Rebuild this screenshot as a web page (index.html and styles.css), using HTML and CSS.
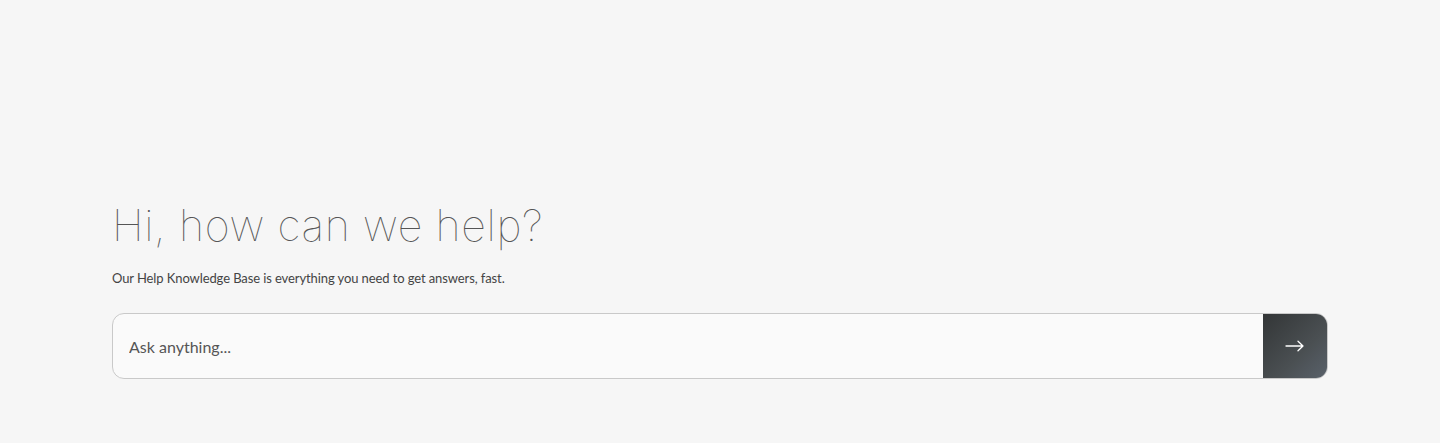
FILE: index.html
```html
<!DOCTYPE html>
<html lang="en">
<head>
<meta charset="utf-8">
<title>Help</title>
<link rel="stylesheet" href="styles.css">
</head>
<body>
<main class="hero">
  <h1 class="title">Hi, how can we help?</h1>
  <p class="lead">Our Help Knowledge Base is everything you need to get answers, fast.</p>
  <form class="search">
    <input class="search-input" type="text" placeholder="Ask anything...">
    <button class="search-btn" type="button" aria-label="Search">
      <svg width="20" height="12" viewBox="0 0 20 12" fill="none" stroke="#fff" stroke-width="1.3" stroke-linecap="round" stroke-linejoin="round"><path d="M1 6h17M13 1.2 18 6l-5 4.8"/></svg>
    </button>
  </form>
</main>
</body>
</html>
```
FILE: styles.css
```css
html, body { margin: 0; padding: 0; }
body {
  background: #f6f6f6;
  font-family: "Lato", "Inter", sans-serif;
  color: #444;
  height: 443px;
}
.hero {
  padding: 197px 112px 0 112px;
}
.title {
  margin: 0;
  font-family: "Inter", "Lato", sans-serif;
  font-weight: 100;
  font-size: 43px;
  line-height: 56px;
  letter-spacing: 0.6px;
  color: #555;
}
.lead {
  margin: 16px 0 0 0;
  font-size: 13px;
  line-height: 18px;
  color: #444;
  letter-spacing: -0.1px;
}
.search {
  margin-top: 26px;
  display: flex;
  height: 66px;
  border: 1px solid #c9c9c9;
  border-radius: 12px;
  background: #fafafa;
  overflow: hidden;
  box-sizing: border-box;
}
.search-input {
  flex: 1;
  border: 0;
  outline: 0;
  background: transparent;
  padding: 0 16px;
  font-family: "Lato", sans-serif;
  font-weight: 400;
  font-size: 16px;
  color: #444;
}
.search-input::placeholder { color: #555; }
.search-btn {
  width: 64px;
  border: 0;
  padding: 0;
  background: linear-gradient(135deg, #333637 0%, #4a4f52 60%, #59616a 100%);
  display: flex;
  align-items: center;
  justify-content: center;
  cursor: pointer;
}
```
